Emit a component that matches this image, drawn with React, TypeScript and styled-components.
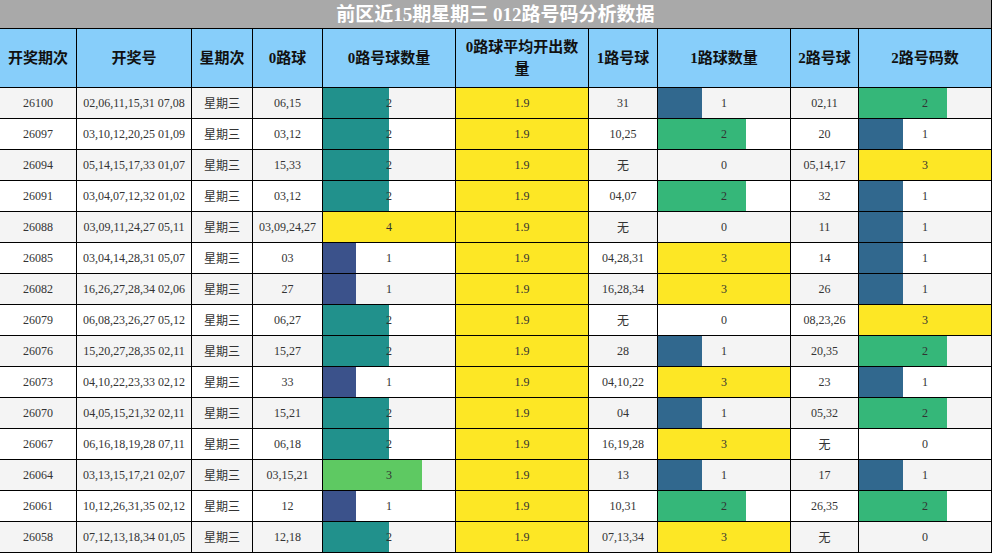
import React from "react";
import styled, { createGlobalStyle } from "styled-components";

const Global = createGlobalStyle`
  html, body { margin: 0; padding: 0; background: #fff; }
  body { font-family: "Liberation Serif", "Noto Sans CJK SC", serif; }
`;

const Table = styled.div`
  width: 992px;
  box-sizing: border-box;
  padding: 0 1px 1px 0;
  background: #000;
  display: grid;
  grid-template-columns: 76px 114px 60px 69px 132px 132px 68px 132px 67px 132px;
  grid-template-rows: 28px 58px repeat(15, 30px);
  gap: 1px;
`;

const Title = styled.div`
  grid-column: 1 / -1;
  background: #a9a9a9;
  color: #fff;
  font-weight: bold;
  font-size: 19px;
  display: flex;
  align-items: center;
  justify-content: center;
  line-height: 1;
`;

const HeadCell = styled.div`
  background: #87cefa;
  color: #111;
  font-weight: bold;
  font-size: 15px;
  line-height: 22px;
  display: flex;
  align-items: center;
  justify-content: center;
  text-align: center;
  padding: 0 6px;
`;

const Cell = styled.div<{ $alt: boolean }>`
  background: ${(p) => (p.$alt ? "#f4f4f4" : "#ffffff")};
  color: #333;
  font-size: 12px;
  display: flex;
  align-items: center;
  justify-content: center;
  white-space: nowrap;
`;

const BarCell = styled(Cell)<{ $fill: string }>`
  background-image: linear-gradient(
    to right,
    ${(p) => p.$fill} var(--pct),
    transparent var(--pct)
  );
`;

const FullCell = styled(Cell)`
  background: #fde725;
`;

type Row = [string, string, string, number, string, number, string, number];

const rows: Row[] = [
  ["26100", "02,06,11,15,31 07,08", "06,15", 2, "31", 1, "02,11", 2],
  ["26097", "03,10,12,20,25 01,09", "03,12", 2, "10,25", 2, "20", 1],
  ["26094", "05,14,15,17,33 01,07", "15,33", 2, "无", 0, "05,14,17", 3],
  ["26091", "03,04,07,12,32 01,02", "03,12", 2, "04,07", 2, "32", 1],
  ["26088", "03,09,11,24,27 05,11", "03,09,24,27", 4, "无", 0, "11", 1],
  ["26085", "03,04,14,28,31 05,07", "03", 1, "04,28,31", 3, "14", 1],
  ["26082", "16,26,27,28,34 02,06", "27", 1, "16,28,34", 3, "26", 1],
  ["26079", "06,08,23,26,27 05,12", "06,27", 2, "无", 0, "08,23,26", 3],
  ["26076", "15,20,27,28,35 02,11", "15,27", 2, "28", 1, "20,35", 2],
  ["26073", "04,10,22,23,33 02,12", "33", 1, "04,10,22", 3, "23", 1],
  ["26070", "04,05,15,21,32 02,11", "15,21", 2, "04", 1, "05,32", 2],
  ["26067", "06,16,18,19,28 07,11", "06,18", 2, "16,19,28", 3, "无", 0],
  ["26064", "03,13,15,17,21 02,07", "03,15,21", 3, "13", 1, "17", 1],
  ["26061", "10,12,26,31,35 02,12", "12", 1, "10,31", 2, "26,35", 2],
  ["26058", "07,12,13,18,34 01,05", "12,18", 2, "07,13,34", 3, "无", 0],
];

const scale4 = ["transparent", "#3b528b", "#21918c", "#5ec962", "#fde725"];
const scale3 = ["transparent", "#31688e", "#35b779", "#fde725"];

const headers = [
  "开奖期次",
  "开奖号",
  "星期次",
  "0路球",
  "0路号球数量",
  "0路球平均开出数量",
  "1路号球",
  "1路球数量",
  "2路号球",
  "2路号码数",
];

function Bar({ v, max, colors, alt }: { v: number; max: number; colors: string[]; alt: boolean }) {
  const pct = (v / max) * 100;
  return (
    <BarCell
      $alt={alt}
      $fill={colors[v]}
      style={{ ["--pct" as string]: `${pct}%` } as React.CSSProperties}
    >
      {v}
    </BarCell>
  );
}

export default function App() {
  return (
    <>
      <Global />
      <Table>
        <Title>前区近15期星期三 012路号码分析数据</Title>
        {headers.map((h) => (
          <HeadCell key={h}>{h}</HeadCell>
        ))}
        {rows.map((r, i) => {
          const alt = i % 2 === 0;
          return (
            <React.Fragment key={r[0]}>
              <Cell $alt={alt}>{r[0]}</Cell>
              <Cell $alt={alt}>{r[1]}</Cell>
              <Cell $alt={alt}>星期三</Cell>
              <Cell $alt={alt}>{r[2]}</Cell>
              <Bar v={r[3]} max={4} colors={scale4} alt={alt} />
              <FullCell $alt={alt}>1.9</FullCell>
              <Cell $alt={alt}>{r[4]}</Cell>
              <Bar v={r[5]} max={3} colors={scale3} alt={alt} />
              <Cell $alt={alt}>{r[6]}</Cell>
              <Bar v={r[7]} max={3} colors={scale3} alt={alt} />
            </React.Fragment>
          );
        })}
      </Table>
    </>
  );
}
